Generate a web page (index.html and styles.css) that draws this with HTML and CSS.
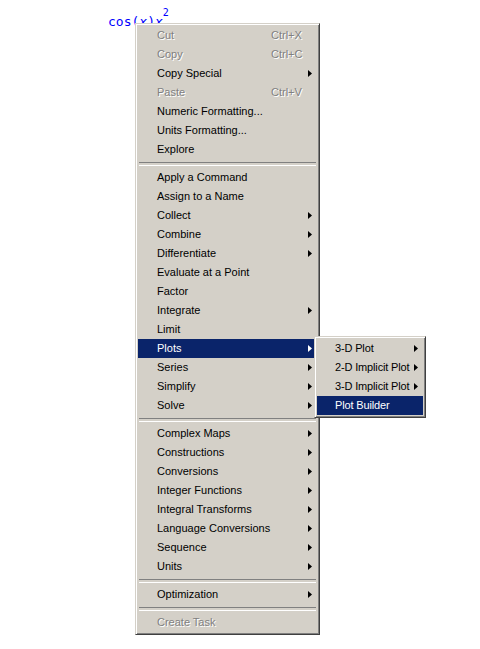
FILE: index.html
```html
<!DOCTYPE html>
<html lang="en">
<head>
    <meta charset="UTF-8">
    <title>Context Menu</title>
    <link rel="stylesheet" href="styles.css">
</head>
<body>
    <div class="worksheet">
        <span class="math">cos(<i>x</i>)<i>x</i><sup>2</sup></span>
    </div>

    <!-- Menu de contexto -->
    <div class="menu main-menu">
        <div class="item disabled"><span class="label">Cut</span><span class="key">Ctrl+X</span></div>
        <div class="item disabled"><span class="label">Copy</span><span class="key">Ctrl+C</span></div>
        <div class="item has-sub"><span class="label">Copy Special</span></div>
        <div class="item disabled"><span class="label">Paste</span><span class="key">Ctrl+V</span></div>
        <div class="item"><span class="label">Numeric Formatting...</span></div>
        <div class="item"><span class="label">Units Formatting...</span></div>
        <div class="item"><span class="label">Explore</span></div>
        <div class="separator"></div>
        <div class="item"><span class="label">Apply a Command</span></div>
        <div class="item"><span class="label">Assign to a Name</span></div>
        <div class="item has-sub"><span class="label">Collect</span></div>
        <div class="item has-sub"><span class="label">Combine</span></div>
        <div class="item has-sub"><span class="label">Differentiate</span></div>
        <div class="item"><span class="label">Evaluate at a Point</span></div>
        <div class="item"><span class="label">Factor</span></div>
        <div class="item has-sub"><span class="label">Integrate</span></div>
        <div class="item"><span class="label">Limit</span></div>
        <div class="item has-sub active">
            <span class="label">Plots</span>
            <!-- Submenu -->
            <div class="menu sub-menu">
                <div class="item has-sub"><span class="label">3-D Plot</span></div>
                <div class="item has-sub"><span class="label">2-D Implicit Plot</span></div>
                <div class="item has-sub"><span class="label">3-D Implicit Plot</span></div>
                <div class="item active"><span class="label">Plot Builder</span></div>
            </div>
        </div>
        <div class="item has-sub"><span class="label">Series</span></div>
        <div class="item has-sub"><span class="label">Simplify</span></div>
        <div class="item has-sub"><span class="label">Solve</span></div>
        <div class="separator"></div>
        <div class="item has-sub"><span class="label">Complex Maps</span></div>
        <div class="item has-sub"><span class="label">Constructions</span></div>
        <div class="item has-sub"><span class="label">Conversions</span></div>
        <div class="item has-sub"><span class="label">Integer Functions</span></div>
        <div class="item has-sub"><span class="label">Integral Transforms</span></div>
        <div class="item has-sub"><span class="label">Language Conversions</span></div>
        <div class="item has-sub"><span class="label">Sequence</span></div>
        <div class="item has-sub"><span class="label">Units</span></div>
        <div class="separator"></div>
        <div class="item has-sub"><span class="label">Optimization</span></div>
        <div class="separator"></div>
        <div class="item disabled"><span class="label">Create Task</span></div>
    </div>
</body>
</html>
```

FILE: styles.css
```css
* {
    margin: 0;
    padding: 0;
    box-sizing: border-box;
}
body {
    background-color: #fff;
    width: 480px;
    height: 649px;
    position: relative;
    overflow: hidden;
    font-family: "Liberation Sans", Arial, sans-serif;
}
/* Expressao no worksheet */
.worksheet {
    padding: 12px 0 0 108px;
}
.math {
    font-family: "DejaVu Sans Mono", monospace;
    font-size: 13px;
    color: #0000ff;
    line-height: 20px;
}
.math i {
    font-style: italic;
}
.math sup {
    font-size: 10px;
    vertical-align: 10px;
    line-height: 0;
}
/* Menu estilo Windows classico */
.menu {
    position: absolute;
    background-color: #d4d0c8;
    border: 1px solid;
    border-color: #d4d0c8 #404040 #404040 #d4d0c8;
    box-shadow: inset 1px 1px 0 #fff, inset -1px -1px 0 #808080;
    padding: 2px;
    font-size: 11px;
    color: #000;
}
.main-menu {
    left: 135px;
    top: 23px;
    width: 185px;
}
.sub-menu {
    left: 176px;
    top: -3px;
    width: 112px;
}
.item {
    position: relative;
    display: flex;
    align-items: center;
    height: 19px;
    padding-left: 19px;
    padding-bottom: 2px;
    white-space: nowrap;
}
.sub-menu .item {
    padding-left: 18px;
    letter-spacing: -0.15px;
}
.label {
    min-width: 114px;
}
.key {
    color: inherit;
}
.item.disabled {
    color: #808080;
    text-shadow: 1px 1px 0 #fff;
}
.item.active {
    background-color: #0a246a;
    color: #fff;
}
.sub-menu .item {
    color: #000;
    background-color: transparent;
}
.sub-menu .item.active {
    background-color: #0a246a;
    color: #fff;
}
/* Seta de submenu */
.item.has-sub::after {
    content: "";
    position: absolute;
    right: 5px;
    top: 6px;
    width: 4px;
    height: 7px;
    background-color: #000;
    clip-path: polygon(0 0, 100% 50%, 0 100%);
}
.main-menu > .item.active::after {
    background-color: #fff;
}
.sub-menu .item.has-sub::after {
    background-color: #000;
}
.separator {
    height: 9px;
    padding: 3px 1px 0;
}
.separator::before {
    content: "";
    display: block;
    height: 2px;
    border-top: 1px solid #808080;
    border-bottom: 1px solid #fff;
}
```
